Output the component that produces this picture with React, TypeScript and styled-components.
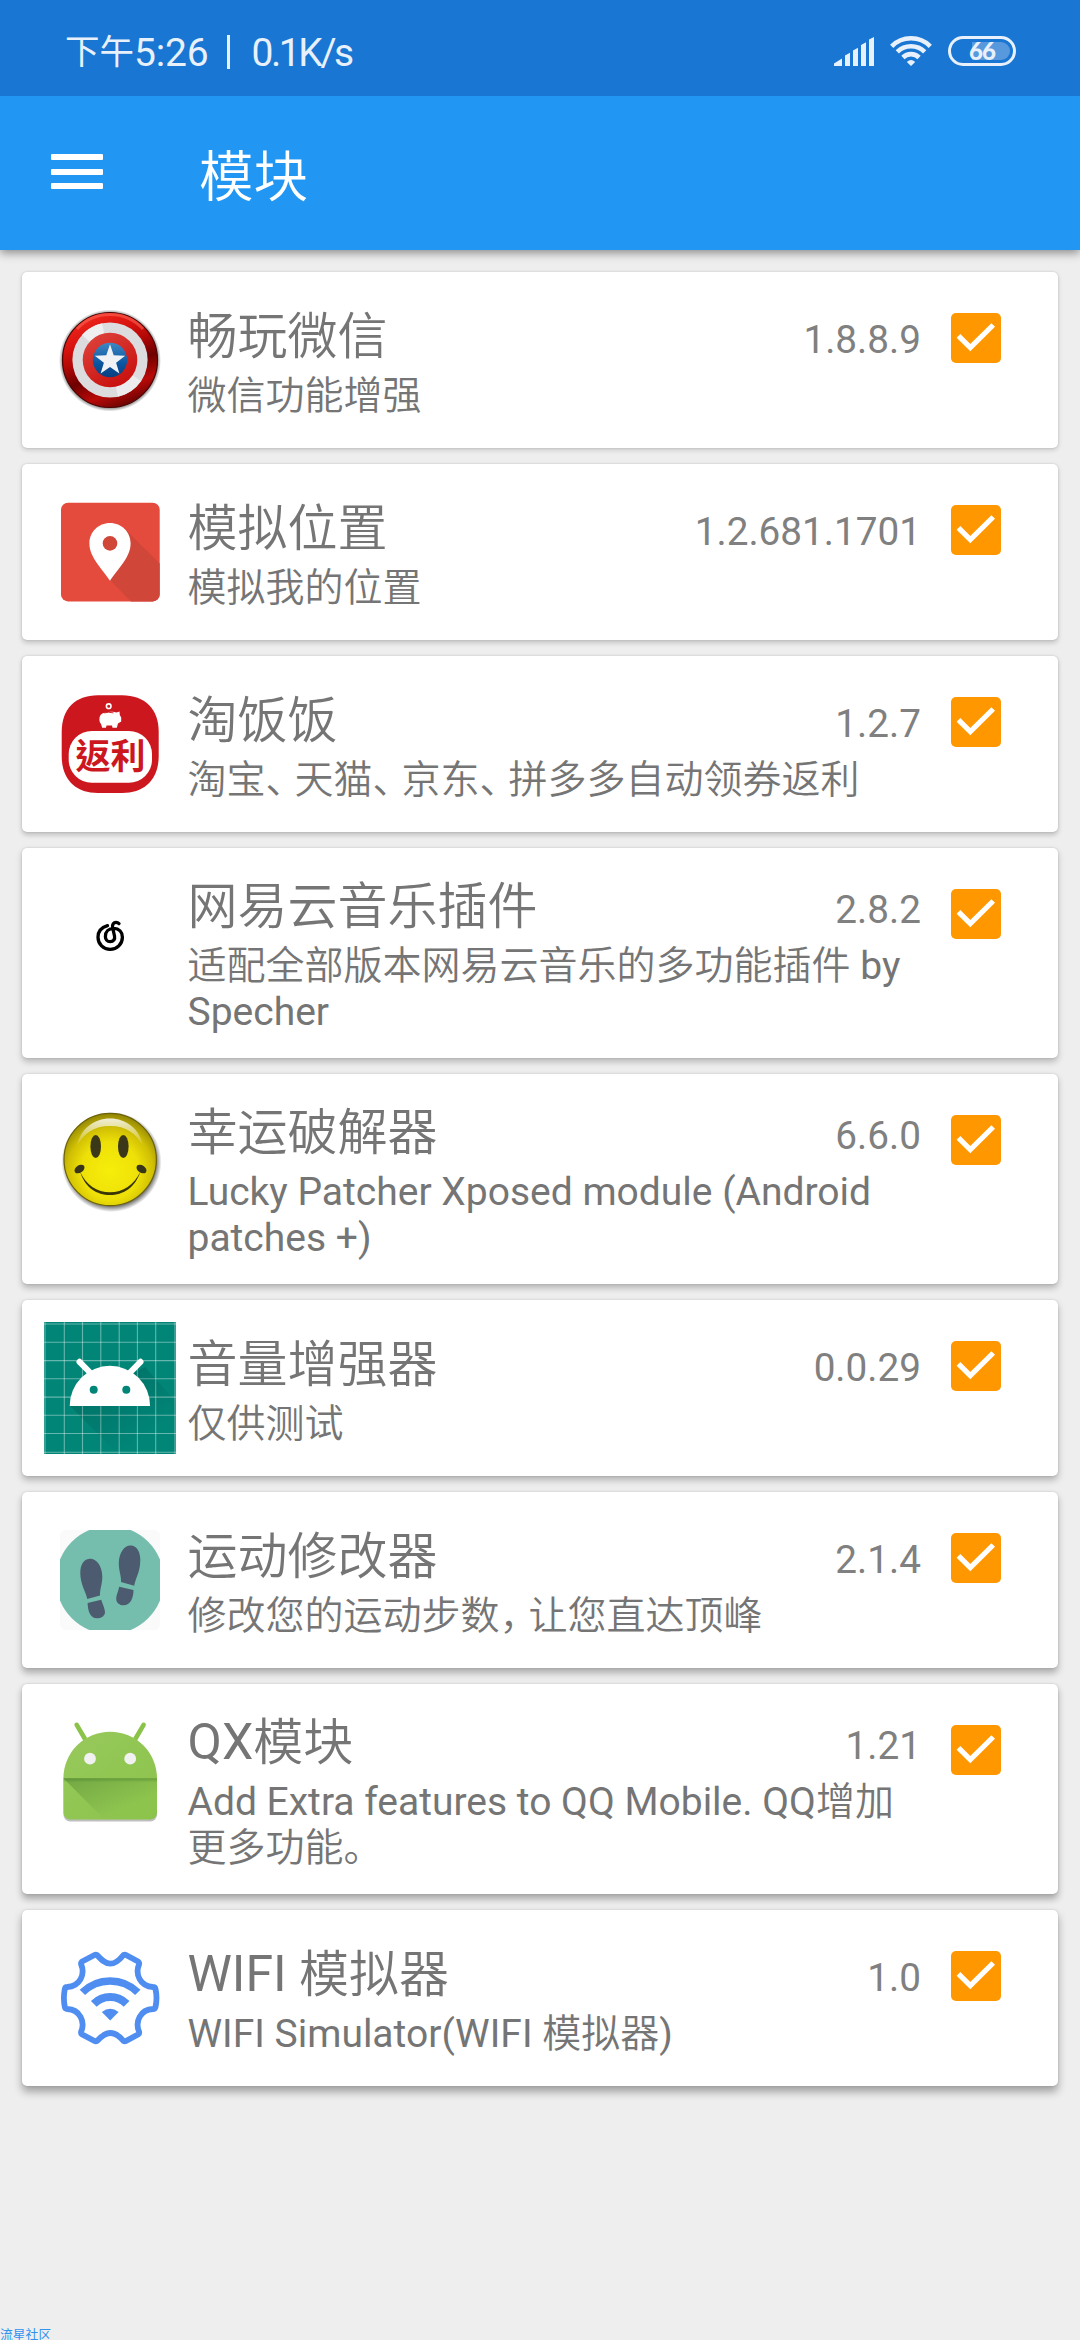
import React from 'react';
import styled, { createGlobalStyle } from 'styled-components';

type ModuleType = {
  name: string;
  desc: string;
  version: string;
  icon: React.JSX.Element;
};

const ShieldIcon = (): React.JSX.Element => (
  <IconSvg viewBox="0 0 132 132">
    <defs>
      <linearGradient id="shieldRed" x1="0.3" y1="0" x2="0.7" y2="1">
        <stop offset="0" stopColor="#f0281e" />
        <stop offset="0.25" stopColor="#d8120e" />
        <stop offset="0.42" stopColor="#b00806" />
        <stop offset="0.6" stopColor="#6e0000" />
        <stop offset="0.8" stopColor="#b80a08" />
        <stop offset="1" stopColor="#5e0202" />
      </linearGradient>
      <radialGradient id="shieldShadow">
        <stop offset="0.9" stopColor="#000" stopOpacity="0.6" />
        <stop offset="1" stopColor="#000" stopOpacity="0" />
      </radialGradient>
      <linearGradient id="shieldInner" x1="0" y1="0" x2="0.6" y2="1">
        <stop offset="0" stopColor="#e0463f" />
        <stop offset="1" stopColor="#c9120f" />
      </linearGradient>
      <linearGradient id="shieldBlue" x1="0" y1="0" x2="0" y2="1">
        <stop offset="0" stopColor="#3f88c4" />
        <stop offset="0.6" stopColor="#0a55a0" />
        <stop offset="1" stopColor="#0b3f80" />
      </linearGradient>
    </defs>
    <circle cx="66" cy="66.5" r="51" fill="url(#shieldShadow)" />
    <circle cx="66" cy="66" r="47.5" fill="url(#shieldRed)" stroke="#4a0505" strokeWidth="1.2" />
    <path d="M33 35a45 45 0 0 1 66 0" fill="none" stroke="#ff6a5a" strokeOpacity="0.55" strokeWidth="3" />
    <circle cx="66" cy="66" r="37.6" fill="#dcdcde" />
    <path d="M66 66L38 41A37.6 37.6 0 0 1 58 29.3z" fill="#efeff0" />
    <path d="M66 66L97 87A37.6 37.6 0 0 1 74 102.7z" fill="#ececee" />
    <circle cx="66" cy="66" r="27.3" fill="url(#shieldInner)" />
    <circle cx="66" cy="66" r="17.2" fill="url(#shieldBlue)" />
    <path
      d="M66 50.3L69.7 61.3L81.2 61.8L72.1 68.8L75.4 79.4L66 72.9L56.6 79.4L59.9 68.8L50.8 61.8L62.3 61.3z"
      fill="#f1f2f5"
    />
  </IconSvg>
);

const PinIcon = (): React.JSX.Element => (
  <IconSvg viewBox="0 0 132 132">
    <rect x="17" y="16.7" width="98.7" height="98.7" rx="7" fill="#e54b3d" />
    <path d="M82 44L115.7 77.5V108.4a7 7 0 0 1-7 7H87L64 92z" fill="#d0473a" />
    <path
      d="M66 37c-11.5 0-20.6 9-20.6 20.4C45.4 71.5 58 82 66 94.8C74 82 86.6 71.5 86.6 57.4C86.6 46 77.5 37 66 37z"
      fill="#fff"
    />
    <circle cx="66" cy="57.4" r="7.3" fill="#d0473a" />
  </IconSvg>
);

const RebateIcon = (): React.JSX.Element => (
  <IconSvg viewBox="0 0 132 132">
    <path
      d="M54 17.3H78C101 17.3 114.7 31 114.7 54V78C114.7 101 101 115 78 115H54C31 115 17.7 101 17.7 78V54C17.7 31 31 17.3 54 17.3z"
      fill="#cc171e"
    />
    <rect x="24.7" y="53" width="83.3" height="51.7" rx="23" fill="#fff" />
    <circle cx="64.7" cy="28.2" r="2.3" fill="none" stroke="#fff" strokeWidth="1.6" />
    <path
      d="M57 36.5C60 33.5 69 33 72.5 34.5L75.5 33.5L75.8 37L77.2 39.5V43.5L74 45.5L72.8 49.8H68.5L68 47.5H62.5L62 49.8H58.2L57 46C55 44 54.8 39 57 36.5z"
      fill="#fff"
    />
    <path d="M60 34.9Q64.7 33.6 69.5 34.9" fill="none" stroke="#cc171e" strokeWidth="0.9" />
    <RebateText x="66.5" y="91.3" textAnchor="middle">
      返利
    </RebateText>
  </IconSvg>
);

const MusicIcon = (): React.JSX.Element => (
  <IconSvg viewBox="0 0 132 132">
    <path
      d="M63.5 55.7C57.5 57.5 54 62 54 67.2A12.2 12.2 0 0 0 78.4 67.2C78.4 62 75 58.6 69.8 58.4C64.5 58.4 61.4 62 61.4 66.4C61.4 69.5 63.3 71.7 66.2 71.7C69.5 71.7 71.2 69 70.5 66L68.6 57.5C68 54.2 69.8 52.3 72 52.3C73.3 52.3 74.2 52.7 75 53.6"
      fill="none"
      stroke="#000"
      strokeWidth="3.3"
      strokeLinecap="round"
    />
  </IconSvg>
);

const SmileIcon = (): React.JSX.Element => (
  <IconSvg viewBox="0 0 132 132">
    <defs>
      <radialGradient id="smileFace" cx="0.5" cy="0.62" r="0.62">
        <stop offset="0" stopColor="#f6ee0a" />
        <stop offset="0.5" stopColor="#eee008" />
        <stop offset="0.75" stopColor="#d0bf04" />
        <stop offset="1" stopColor="#8f8304" />
      </radialGradient>
      <radialGradient id="smileShadow">
        <stop offset="0.86" stopColor="#222" stopOpacity="0.75" />
        <stop offset="1" stopColor="#222" stopOpacity="0" />
      </radialGradient>
      <linearGradient id="smileShine" x1="0" y1="0" x2="0" y2="1">
        <stop offset="0" stopColor="#fff" stopOpacity="0.85" />
        <stop offset="1" stopColor="#fff" stopOpacity="0.05" />
      </linearGradient>
    </defs>
    <circle cx="67.5" cy="66" r="50" fill="url(#smileShadow)" />
    <circle cx="66.2" cy="63.5" r="46.2" fill="url(#smileFace)" stroke="#6b6206" strokeWidth="1.2" />
    <path d="M33 50C36 33 50 22.5 66 22.5C82 22.5 96 33 99 50C92 37 82 30 66 30C50 30 40 37 33 50z" fill="url(#smileShine)" />
    <ellipse cx="51.7" cy="50.5" rx="5.3" ry="11.5" fill="#3a3818" />
    <ellipse cx="79.3" cy="50.5" rx="5.3" ry="11.5" fill="#3a3818" />
    <path
      d="M36 75.5C42 89 53 96.3 66 96.3C79 96.3 90 89 96.5 75.5C91 92 79 99 66 99C53 99 41 92 36 75.5z"
      fill="#3a3505"
    />
    <ellipse cx="35.5" cy="73" rx="5.5" ry="3.7" fill="#38351a" transform="rotate(-35 35.5 73)" />
    <ellipse cx="97.5" cy="73" rx="5.5" ry="3.7" fill="#38351a" transform="rotate(35 97.5 73)" />
  </IconSvg>
);

const gridX = [1, 20.3, 38.5, 56.8, 75.2, 93.4, 111.7, 131];
const gridY = [2, 20.3, 38.6, 56.8, 75.1, 93.3, 111.5, 130.3];

const DroidGridIcon = (): React.JSX.Element => (
  <IconSvg viewBox="0 0 132 132">
    <defs>
      <linearGradient id="droidShade" x1="0.1" y1="0" x2="0.7" y2="0.8">
        <stop offset="0" stopColor="#000" stopOpacity="0.18" />
        <stop offset="1" stopColor="#000" stopOpacity="0" />
      </linearGradient>
    </defs>
    <rect width="132" height="132" fill="#008577" />
    {gridX.map((x) => (
      <path key={x} d={`M${x} 0V132`} stroke="#fff" strokeOpacity="0.4" strokeWidth="1.1" />
    ))}
    {gridY.map((y) => (
      <path key={y} d={`M0 ${y}H132`} stroke="#fff" strokeOpacity="0.4" strokeWidth="1.1" />
    ))}
    <path d="M26 84L74 132H132V80L101 45z" fill="url(#droidShade)" />
    <path d="M25.7 84a40.2 40.2 0 0 1 80.4 0z" fill="#fff" />
    <path d="M35.5 39.8L47 51.5M96.5 39.8L85 51.5" stroke="#fff" strokeWidth="6" strokeLinecap="round" />
    <circle cx="49.7" cy="67.7" r="4" fill="#008577" />
    <circle cx="82.3" cy="67.7" r="4" fill="#008577" />
  </IconSvg>
);

const StepsIcon = (): React.JSX.Element => (
  <IconSvg viewBox="0 0 132 132">
    <defs>
      <clipPath id="stepsClip">
        <rect x="16" y="16" width="100" height="100" rx="6" />
      </clipPath>
    </defs>
    <g clipPath="url(#stepsClip)">
      <rect x="16" y="16" width="100" height="100" fill="#fafafa" />
      <circle cx="66" cy="66" r="54" fill="#75beae" />
    </g>
    <g fill="#4d5b70">
      <path d="M45.5 44.7C52 44.2 58 51 58.3 62C58.5 70 55.8 75 56 81.5L43.3 85C41.5 77 36.3 70 36.3 59C36.3 51 39.5 45.3 45.5 44.7z" />
      <path d="M43.6 89L57.2 85.7C59 91 61 95 61 98.5C60.5 102.5 57 104.3 53 104.3C46 104.3 43.8 96.5 43.6 89z" />
      <path d="M87.5 31.5C81 30.5 75 38 74.8 49C74.7 57 77.5 62 77 68L90.2 71.8C91.5 64 96.3 58 96.3 46C96.3 38 93 32.3 87.5 31.5z" />
      <path d="M89.5 76L75.2 72.8C74.2 78 72 81.5 72.2 85C72.5 89 75.5 91.3 79.5 91.3C86.5 91.3 89.5 84 89.5 76z" />
    </g>
  </IconSvg>
);

const DroidIcon = (): React.JSX.Element => (
  <IconSvg viewBox="0 0 132 132">
    <defs>
      <linearGradient id="droidFold" x1="0" y1="0" x2="0.7" y2="0.7">
        <stop offset="0" stopColor="#33691e" stopOpacity="0.35" />
        <stop offset="1" stopColor="#33691e" stopOpacity="0" />
      </linearGradient>
      <linearGradient id="droidEdge" x1="0" y1="0" x2="0" y2="1">
        <stop offset="0" stopColor="#33691e" stopOpacity="0.35" />
        <stop offset="1" stopColor="#33691e" stopOpacity="0" />
      </linearGradient>
      <linearGradient id="droidBody" x1="0" y1="0" x2="1" y2="1">
        <stop offset="0" stopColor="#97c95c" />
        <stop offset="1" stopColor="#8bc34a" />
      </linearGradient>
    </defs>
    <path d="M19.5 75V109a6.5 6.5 0 0 0 6.5 6.5h80.5a6.5 6.5 0 0 0 6.5-6.5V75z" fill="#000" fillOpacity="0.25" />
    <path d="M32.7 18.8L41 33M99.6 18.8L91.3 33" stroke="#8bc34a" strokeWidth="4.6" strokeLinecap="round" />
    <path
      d="M19.4 72.3a46.8 46.6 0 0 1 93.6 0V107a6.5 6.5 0 0 1-6.5 6.5H26a6.5 6.5 0 0 1-6.5-6.5z"
      fill="url(#droidBody)"
    />
    <path d="M19.4 72.3H113V86L90 113.5H60.5z" fill="url(#droidFold)" />
    <rect x="19.4" y="72.3" width="93.6" height="4" fill="url(#droidEdge)" />
    <circle cx="46" cy="52.7" r="5.9" fill="#f1f1f1" />
    <circle cx="86.2" cy="52.7" r="5.9" fill="#f1f1f1" />
  </IconSvg>
);

const WifiGearIcon = (): React.JSX.Element => (
  <IconSvg viewBox="0 0 132 132">
    <g fill="none" stroke="#4f8ef0" strokeLinejoin="round">
      <path
        d="M53 23C57.5 28 61 31.7 66.3 31.7C71.5 31.7 75.5 28 79.5 23Q80.7 22.3 82 23L94.5 29.8Q95.5 30.7 95 32.5C91 42 96 54.5 109 55Q111 55 111.5 57Q113.5 66 111.5 75Q111 77 109 77C96 77.5 91 90 95 99.5Q95.5 101.3 94.5 102.2L82 109Q80.7 109.7 79.5 109C75.5 104 71.5 101 66.3 101C61 101 57.5 104 53 109Q51.8 109.7 50.5 109L37.7 102.2Q36.7 101.3 37.2 99.5C41.2 90 36.2 77.5 23.2 77Q21.2 77 20.8 75Q19 66 20.8 57Q21.2 55 23.2 55C36.2 54.5 41.2 42 37.2 32.5Q36.7 30.7 37.7 29.8L50.5 23Q51.8 22.3 53 23z"
        strokeWidth="5.8"
      />
      <path d="M38.4 60.4a39.2 39.2 0 0 1 55.4 0" strokeWidth="7.6" />
      <path d="M49.8 71.8a23.2 23.2 0 0 1 32.8 0" strokeWidth="8.2" />
    </g>
    <path d="M66.2 88.5L57.8 80Q66.2 73.5 74.6 80z" fill="#4f8ef0" />
  </IconSvg>
);

const modules: ModuleType[] = [
  { name: '畅玩微信', desc: '微信功能增强', version: '1.8.8.9', icon: <ShieldIcon /> },
  { name: '模拟位置', desc: '模拟我的位置', version: '1.2.681.1701', icon: <PinIcon /> },
  { name: '淘饭饭', desc: '淘宝、天猫、京东、拼多多自动领券返利', version: '1.2.7', icon: <RebateIcon /> },
  { name: '网易云音乐插件', desc: '适配全部版本网易云音乐的多功能插件 by Specher', version: '2.8.2', icon: <MusicIcon /> },
  { name: '幸运破解器', desc: 'Lucky Patcher Xposed module (Android patches +)', version: '6.6.0', icon: <SmileIcon /> },
  { name: '音量增强器', desc: '仅供测试', version: '0.0.29', icon: <DroidGridIcon /> },
  { name: '运动修改器', desc: '修改您的运动步数，让您直达顶峰', version: '2.1.4', icon: <StepsIcon /> },
  { name: 'QX模块', desc: 'Add Extra features to QQ Mobile. QQ增加更多功能。', version: '1.21', icon: <DroidIcon /> },
  { name: 'WIFI 模拟器', desc: 'WIFI Simulator(WIFI 模拟器)', version: '1.0', icon: <WifiGearIcon /> },
];

const renderRun = (run: string, key: number): React.JSX.Element => {
  if (/[、，]/.test(run)) return <HanComma key={key}>{run}</HanComma>;
  if (/[\u3000-\u9fff]/.test(run)) return <Han key={key}>{run}</Han>;
  return <React.Fragment key={key}>{run}</React.Fragment>;
};

// Latin runs keep the regular weight, Chinese runs are set lighter with narrow commas.
const renderRuns = (text: string): React.JSX.Element[] =>
  text
    .split(/([、，]|[\u3002-\u9fff]+)/)
    .filter(Boolean)
    .map(renderRun);

const StatusIcons = (): React.JSX.Element => (
  <StatusIconRow>
    <svg width="40" height="29" viewBox="0 0 40 29" fill="#e8f1fb">
      <path d="M0 29V26.5L8 21.5V29zM11 29V18.5L16 15.8V29zM19 29V13.5L24 10.7V29zM27 29V8L32 5.2V29zM35 29V2.5L40 0V29z" />
    </svg>
    <WifiSvg width="42" height="30" viewBox="0 0 42 30">
      <g fill="none" stroke="#e8f1fb" strokeWidth="4.6">
        <path d="M1.7 10.3a27.3 27.3 0 0 1 38.6 0" />
        <path d="M7.3 15.9a19.4 19.4 0 0 1 27.4 0" />
        <path d="M12.9 21.5a11.5 11.5 0 0 1 16.2 0" />
      </g>
      <path d="M21 30L16.8 26Q21 21.8 25.2 26z" fill="#e8f1fb" />
    </WifiSvg>
    <Battery>
      <BatteryFill />
      <BatteryText>66</BatteryText>
    </Battery>
  </StatusIconRow>
);

const ModuleCard = ({ item, depth }: { item: ModuleType; depth: number }): React.JSX.Element => (
  <Card $depth={depth}>
    {item.icon}
    <CardText>
      <CardHead>
        <CardTitle>{renderRuns(item.name)}</CardTitle>
        <CardVersion>{item.version}</CardVersion>
      </CardHead>
      <CardDesc>{renderRuns(item.desc)}</CardDesc>
    </CardText>
    <Checkbox role="checkbox" aria-checked="true">
      <svg width="50" height="50" viewBox="0 0 50 50">
        <path d="M7.5 22.8L19.3 34.5L42.2 12" fill="none" stroke="#fff" strokeWidth="5.2" />
      </svg>
    </Checkbox>
  </Card>
);

const App = (): React.JSX.Element => (
  <Screen>
    <GlobalStyle />
    <StatusBar>
      <StatusText>
        <StatusPeriod>下午</StatusPeriod>
        <StatusLatin $tracking={-0.2}>5:26</StatusLatin>
        <StatusDivider />
        <StatusLatin $tracking={-2.4}>0.1K/s</StatusLatin>
      </StatusText>
      <StatusIcons />
    </StatusBar>
    <AppBar>
      <MenuButton aria-label="menu">
        <MenuLine />
        <MenuLine />
        <MenuLine />
      </MenuButton>
      <AppTitle>模块</AppTitle>
    </AppBar>
    <ModuleList>
      {modules.map((item, i) => (
        <ModuleCard key={item.name} item={item} depth={i} />
      ))}
    </ModuleList>
    <Community>流星社区</Community>
  </Screen>
);

export default App;

const GlobalStyle = createGlobalStyle`
  body {
    margin: 0;
    background: #eeeeee;
  }
`;

const Screen = styled.div`
  display: flex;
  flex-direction: column;
  width: 1080px;
  height: 2340px;
  overflow: hidden;
  background: #eeeeee;
  color: #757575;
  font-family: Roboto, 'Noto Sans CJK SC', sans-serif;
`;

const StatusBar = styled.header`
  display: flex;
  align-items: center;
  justify-content: space-between;
  position: relative;
  z-index: 1;
  box-sizing: border-box;
  height: 96px;
  padding: 6px 64px 0 65px;
  background: #1976d2;
`;

const StatusText = styled.div`
  display: flex;
  align-items: center;
  line-height: 46px;
  color: #e8f1fb;
`;

const StatusPeriod = styled.span`
  padding-top: 2px;
  font-size: 34.5px;
`;

const StatusLatin = styled.span<{ $tracking: number }>`
  padding-top: 3px;
  font-size: 39px;
  letter-spacing: ${({ $tracking }) => $tracking}px;
`;

const StatusDivider = styled.span`
  width: 3px;
  height: 34px;
  margin: 2px 21px 0 19px;
  background: #e8f1fb;
`;

const StatusIconRow = styled.div`
  display: flex;
  align-items: center;
`;

const WifiSvg = styled.svg`
  margin: 0 16px;
`;

const Battery = styled.div`
  display: flex;
  align-items: center;
  justify-content: center;
  position: relative;
  box-sizing: border-box;
  width: 68px;
  height: 30px;
  border: 3px solid #e8f1fb;
  border-radius: 15px;
`;

const BatteryFill = styled.span`
  position: absolute;
  top: 3px;
  right: 3px;
  width: 38px;
  height: 18px;
  border-radius: 0 9px 9px 0;
  background: #5899de;
`;

const BatteryText = styled.span`
  position: relative;
  font: 900 24px/24px Lato, sans-serif;
  letter-spacing: -1px;
  color: #e8f1fb;
`;

const AppBar = styled.nav`
  display: flex;
  align-items: center;
  flex: none;
  box-sizing: border-box;
  height: 154px;
  padding: 0 51px;
  background: #2196f3;
  box-shadow: 0 3px 9px rgba(0, 0, 0, 0.42);
`;

const MenuButton = styled.button`
  display: flex;
  flex-direction: column;
  gap: 8.5px;
  width: 52px;
  margin: 0 96px 3px 0;
  padding: 0;
  border: 0;
  background: none;
`;

const MenuLine = styled.span`
  height: 6px;
  border-radius: 1px;
  background: #fff;
`;

const AppTitle = styled.h1`
  margin: 7px 0 0;
  font-size: 54.5px;
  font-weight: 350;
  line-height: 64px;
  color: #fff;
`;

const ModuleList = styled.main`
  display: flex;
  flex-direction: column;
  gap: 16px;
  padding: 22px;
`;

const Card = styled.section<{ $depth: number }>`
  display: flex;
  align-items: flex-start;
  padding: 22px 57px 22px 22px;
  border-radius: 5px;
  background: #fff;
  box-shadow:
    0 0 2px rgba(0, 0, 0, 0.16),
    0 ${({ $depth }) => 2 + $depth * 0.4}px ${({ $depth }) => 5 + $depth * 0.4}px
      rgba(0, 0, 0, ${({ $depth }) => 0.16 + $depth * 0.02});
`;

const IconSvg = styled.svg`
  flex: none;
  width: 132px;
  height: 132px;
`;

const RebateText = styled.text`
  font-family: 'Noto Sans CJK TC', sans-serif;
  font-size: 35px;
  font-weight: 700;
  fill: #cc171e;
`;

const CardText = styled.div`
  flex: 1;
  align-self: center;
  box-sizing: border-box;
  padding: 7px 0 1px;
  margin-left: 11.5px;
`;

const CardHead = styled.div`
  display: flex;
  align-items: baseline;
  justify-content: space-between;
  margin-bottom: 8px;
`;

const Han = styled.span`
  font-weight: 350;
  line-height: 1;
`;

const HanComma = styled(Han)`
  letter-spacing: -10px;
`;

const CardTitle = styled.h2`
  margin: 0;
  font-size: 50px;
  font-weight: 400;
  line-height: 58px;

  ${Han} {
    vertical-align: -1px;
  }
`;

const CardVersion = styled.span`
  font-size: 38.7px;
  line-height: 46px;
  color: #808080;
`;

const CardDesc = styled.p`
  margin: 0;
  font-size: 39px;
  line-height: 46px;
`;

const Checkbox = styled.span`
  display: flex;
  flex: none;
  width: 50px;
  height: 50px;
  margin: 19px 0 0 30px;
  border-radius: 5px;
  background: #ff9800;
`;

const Community = styled.footer`
  margin-top: auto;
  font: 400 12.8px/13px 'Noto Sans CJK SC', sans-serif;
  color: #2f93ee;
`;
